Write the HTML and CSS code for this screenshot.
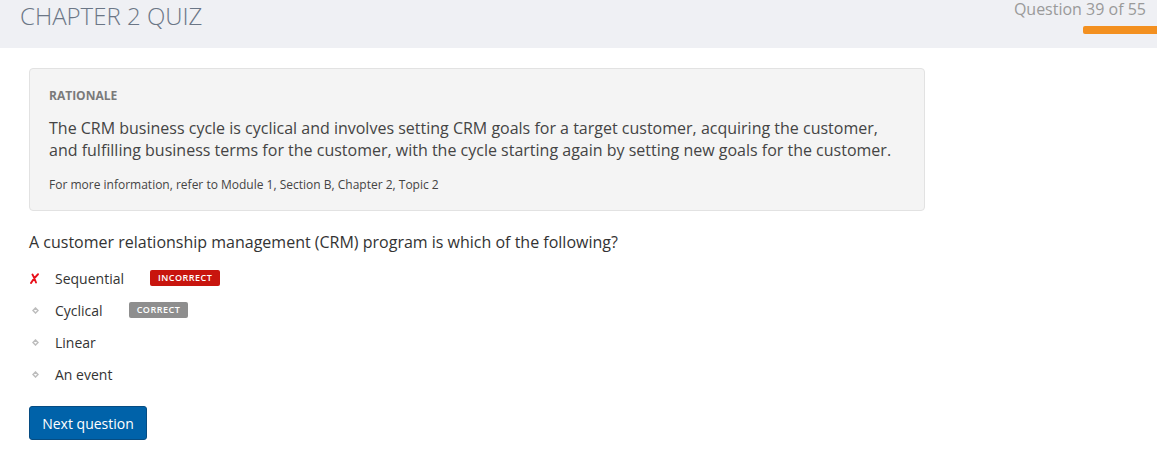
FILE: index.html
```html
<!DOCTYPE html>
<html>
<head>
<meta charset="utf-8">
<link rel="stylesheet" href="styles.css">
</head>
<body>
<header class="top">
  <h1 class="title">CHAPTER 2 QUIZ</h1>
  <div class="progress">
    <div class="progress-label">Question 39 of 55</div>
    <div class="progress-bar"></div>
  </div>
</header>
<main class="content">
  <section class="rationale">
    <div class="rationale-head">RATIONALE</div>
    <p class="rationale-text">The CRM business cycle is cyclical and involves setting CRM goals for a target customer, acquiring the customer, and fulfilling business terms for the customer, with the cycle starting again by setting new goals for the customer.</p>
    <p class="rationale-ref">For more information, refer to Module 1, Section B, Chapter 2, Topic 2</p>
  </section>
  <p class="question">A customer relationship management (CRM) program is which of the following?</p>
  <ul class="options">
    <li class="option">
      <span class="icon"><svg width="9" height="11" viewBox="0 0 9 11"><path d="M2.5 1.5 Q4 4 6 9.5 M8 1.2 Q4 5 1 10" stroke="#e8101a" stroke-width="1.9" stroke-linecap="round" fill="none"/></svg></span>
      <span class="opt-text">Sequential</span>
      <span class="badge badge-wrong">INCORRECT</span>
    </li>
    <li class="option">
      <span class="icon icon-dot"><svg width="7" height="7" viewBox="0 0 7 7"><path d="M3.5 1 L6 3.5 L3.5 6 L1 3.5 Z" stroke="#bdbdbd" stroke-width="1.5" fill="none"/></svg></span>
      <span class="opt-text">Cyclical</span>
      <span class="badge badge-right">CORRECT</span>
    </li>
    <li class="option">
      <span class="icon icon-dot"><svg width="7" height="7" viewBox="0 0 7 7"><path d="M3.5 1 L6 3.5 L3.5 6 L1 3.5 Z" stroke="#bdbdbd" stroke-width="1.5" fill="none"/></svg></span>
      <span class="opt-text">Linear</span>
    </li>
    <li class="option">
      <span class="icon icon-dot"><svg width="7" height="7" viewBox="0 0 7 7"><path d="M3.5 1 L6 3.5 L3.5 6 L1 3.5 Z" stroke="#bdbdbd" stroke-width="1.5" fill="none"/></svg></span>
      <span class="opt-text">An event</span>
    </li>
  </ul>
  <button class="next-btn">Next question</button>
</main>
</body>
</html>
```
FILE: styles.css
```css
html, body {
  margin: 0;
  padding: 0;
  background: #fff;
  font-family: "Open Sans", "Liberation Sans", sans-serif;
  color: #333;
}
.top {
  height: 48px;
  background: #eff0f4;
  display: flex;
  justify-content: space-between;
  align-items: flex-start;
}
.title {
  margin: 0;
  padding-left: 20px;
  font-size: 24px;
  font-weight: 300;
  line-height: 32px;
  color: #6b7686;
}
.progress {
  display: flex;
  flex-direction: column;
  align-items: flex-end;
}
.progress-label {
  font-size: 16px;
  line-height: 18px;
  color: #9a9a9a;
  padding-right: 11px;
}
.progress-bar {
  margin-top: 8px;
  width: 74px;
  height: 8px;
  background: #f39020;
  border-radius: 2px 0 0 2px;
}
.content {
  padding: 20px 29px 0;
}
.rationale {
  width: 856px;
  background: #f4f4f4;
  border: 1px solid #e2e2e2;
  border-radius: 4px;
  padding: 19px 19px 16px;
}
.rationale-head {
  font-size: 12px;
  font-weight: 700;
  line-height: 16px;
  color: #7a7a7a;
}
.rationale-text {
  margin: 13px 0 0;
  font-size: 16px;
  line-height: 22px;
  color: #444;
}
.rationale-ref {
  margin: 15px 0 0;
  font-size: 12px;
  line-height: 18px;
  color: #444;
}
.question {
  margin: 20px 0 0;
  font-size: 16px;
  line-height: 22px;
  color: #333;
}
.options {
  list-style: none;
  margin: 9px 0 0;
  padding: 0;
}
.option {
  display: flex;
  align-items: center;
  height: 32px;
}
.icon {
  width: 26px;
  display: flex;
  align-items: center;
  padding-left: 1px;
  box-sizing: border-box;
}
.icon-dot {
  padding-left: 3px;
}
.opt-text {
  font-size: 14px;
  color: #333;
}
.badge {
  margin-left: 26px;
  font-size: 9px;
  font-weight: 600;
  letter-spacing: 0.5px;
  color: #fff;
  padding: 2px 8px;
  line-height: 12px;
  border-radius: 2px;
}
.badge-wrong {
  background: #c8150e;
}
.badge-right {
  background: #8e8e8e;
}
.next-btn {
  margin-top: 16px;
  width: 118px;
  height: 34px;
  background: #0062a9;
  border: 1px solid #064c82;
  border-radius: 3px;
  color: #fff;
  font-family: "Open Sans", "Liberation Sans", sans-serif;
  font-size: 14px;
  font-weight: 400;
  padding: 0;
}
```
